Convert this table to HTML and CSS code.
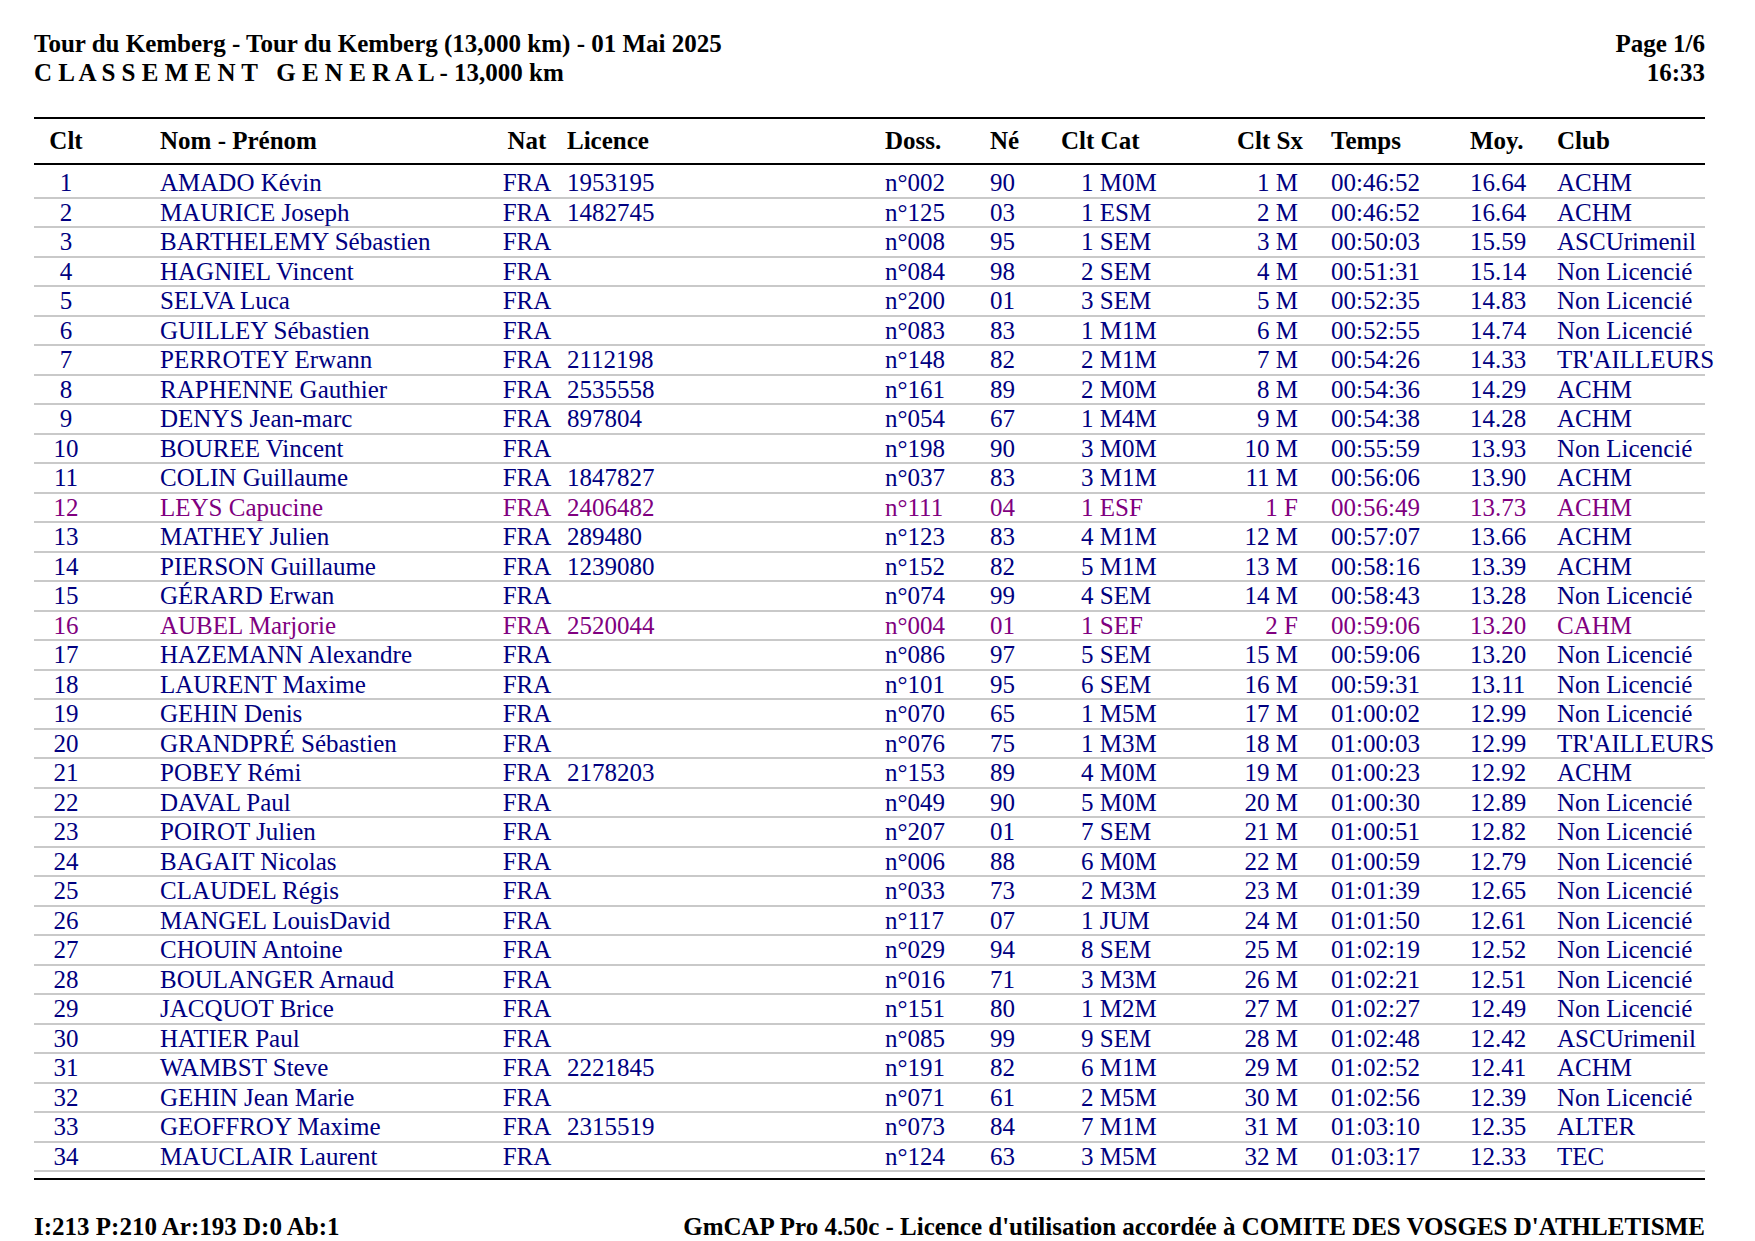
FILE: index.html
```html
<!DOCTYPE html>
<html lang="fr">
<head>
<meta charset="utf-8">
<title>Tour du Kemberg - Classement général</title>
<link rel="stylesheet" href="styles.css">
</head>
<body>
<div class="page">
  <header class="top">
    <div class="title">
      <div>Tour du Kemberg - Tour du Kemberg (13,000 km) - 01 Mai 2025</div>
      <div class="spaced">C L A S S E M E N T   G E N E R A L - 13,000 km</div>
    </div>
    <div class="pageinfo">
      <div>Page 1/6</div>
      <div>16:33</div>
    </div>
  </header>

  <section class="results">
    <div class="row head">
      <div class="c-clt">Clt</div><div class="c-nom">Nom - Prénom</div><div class="c-nat">Nat</div><div class="c-lic">Licence</div><div class="c-dos">Doss.</div><div class="c-ne">Né</div><div class="c-cat head-cat">Clt Cat</div><div class="c-sx head-sx">Clt Sx</div><div class="c-tps">Temps</div><div class="c-moy">Moy.</div><div class="c-club">Club</div>
    </div>
    <div class="body" id="rows"></div>
  </section>

  <footer class="foot">
    <div>I:213 P:210 Ar:193 D:0 Ab:1</div>
    <div>GmCAP Pro 4.50c - Licence d'utilisation accordée à COMITE DES VOSGES D'ATHLETISME</div>
  </footer>
</div>
<script src="script.js"></script>
</body>
</html>
```

FILE: script.js
```js
const data = [
["1","AMADO Kévin","1953195","n°002","90","1 M0M","1 M","00:46:52","16.64","ACHM",0],
["2","MAURICE Joseph","1482745","n°125","03","1 ESM","2 M","00:46:52","16.64","ACHM",0],
["3","BARTHELEMY Sébastien","","n°008","95","1 SEM","3 M","00:50:03","15.59","ASCUrimenil",0],
["4","HAGNIEL Vincent","","n°084","98","2 SEM","4 M","00:51:31","15.14","Non Licencié",0],
["5","SELVA Luca","","n°200","01","3 SEM","5 M","00:52:35","14.83","Non Licencié",0],
["6","GUILLEY Sébastien","","n°083","83","1 M1M","6 M","00:52:55","14.74","Non Licencié",0],
["7","PERROTEY Erwann","2112198","n°148","82","2 M1M","7 M","00:54:26","14.33","TR'AILLEURS",0],
["8","RAPHENNE Gauthier","2535558","n°161","89","2 M0M","8 M","00:54:36","14.29","ACHM",0],
["9","DENYS Jean-marc","897804","n°054","67","1 M4M","9 M","00:54:38","14.28","ACHM",0],
["10","BOUREE Vincent","","n°198","90","3 M0M","10 M","00:55:59","13.93","Non Licencié",0],
["11","COLIN Guillaume","1847827","n°037","83","3 M1M","11 M","00:56:06","13.90","ACHM",0],
["12","LEYS Capucine","2406482","n°111","04","1 ESF","1 F","00:56:49","13.73","ACHM",1],
["13","MATHEY Julien","289480","n°123","83","4 M1M","12 M","00:57:07","13.66","ACHM",0],
["14","PIERSON Guillaume","1239080","n°152","82","5 M1M","13 M","00:58:16","13.39","ACHM",0],
["15","GÉRARD Erwan","","n°074","99","4 SEM","14 M","00:58:43","13.28","Non Licencié",0],
["16","AUBEL Marjorie","2520044","n°004","01","1 SEF","2 F","00:59:06","13.20","CAHM",1],
["17","HAZEMANN Alexandre","","n°086","97","5 SEM","15 M","00:59:06","13.20","Non Licencié",0],
["18","LAURENT Maxime","","n°101","95","6 SEM","16 M","00:59:31","13.11","Non Licencié",0],
["19","GEHIN Denis","","n°070","65","1 M5M","17 M","01:00:02","12.99","Non Licencié",0],
["20","GRANDPRÉ Sébastien","","n°076","75","1 M3M","18 M","01:00:03","12.99","TR'AILLEURS",0],
["21","POBEY Rémi","2178203","n°153","89","4 M0M","19 M","01:00:23","12.92","ACHM",0],
["22","DAVAL Paul","","n°049","90","5 M0M","20 M","01:00:30","12.89","Non Licencié",0],
["23","POIROT Julien","","n°207","01","7 SEM","21 M","01:00:51","12.82","Non Licencié",0],
["24","BAGAIT Nicolas","","n°006","88","6 M0M","22 M","01:00:59","12.79","Non Licencié",0],
["25","CLAUDEL Régis","","n°033","73","2 M3M","23 M","01:01:39","12.65","Non Licencié",0],
["26","MANGEL LouisDavid","","n°117","07","1 JUM","24 M","01:01:50","12.61","Non Licencié",0],
["27","CHOUIN Antoine","","n°029","94","8 SEM","25 M","01:02:19","12.52","Non Licencié",0],
["28","BOULANGER Arnaud","","n°016","71","3 M3M","26 M","01:02:21","12.51","Non Licencié",0],
["29","JACQUOT Brice","","n°151","80","1 M2M","27 M","01:02:27","12.49","Non Licencié",0],
["30","HATIER Paul","","n°085","99","9 SEM","28 M","01:02:48","12.42","ASCUrimenil",0],
["31","WAMBST Steve","2221845","n°191","82","6 M1M","29 M","01:02:52","12.41","ACHM",0],
["32","GEHIN Jean Marie","","n°071","61","2 M5M","30 M","01:02:56","12.39","Non Licencié",0],
["33","GEOFFROY Maxime","2315519","n°073","84","7 M1M","31 M","01:03:10","12.35","ALTER",0],
["34","MAUCLAIR Laurent","","n°124","63","3 M5M","32 M","01:03:17","12.33","TEC",0]
];
const cls = ["c-clt","c-nom","c-nat","c-lic","c-dos","c-ne","c-cat","c-sx","c-tps","c-moy","c-club"];
const host = document.getElementById("rows");
for (const r of data) {
  const row = document.createElement("div");
  row.className = "row" + (r[10] ? " f" : "");
  const vals = [r[0], r[1], "FRA", r[2], r[3], r[4], r[5], r[6], r[7], r[8], r[9]];
  vals.forEach((v, i) => {
    const c = document.createElement("div");
    c.className = cls[i];
    c.textContent = v;
    row.appendChild(c);
  });
  host.appendChild(row);
}
```

FILE: styles.css
```css
html, body {
  margin: 0;
  padding: 0;
  background: #ffffff;
}

body {
  font-family: "Liberation Serif", "Times New Roman", serif;
  font-size: 25px;
  color: #000;
}

.page {
  width: 1671px;
  padding: 29px 0 0 34px;
}

.top {
  display: flex;
  justify-content: space-between;
  font-weight: bold;
  line-height: 29px;
}

.spaced {
  white-space: pre;
}

.pageinfo {
  text-align: right;
}

.results {
  margin-top: 30px;
  border-top: 2px solid #000;
  border-bottom: 2px solid #000;
  padding-bottom: 6px;
}

.row {
  display: grid;
  grid-template-columns: 64px 402px 54px 331px 105px 71px 176px 94px 139px 87px 148px;
  line-height: 27.5px;
  border-bottom: 2px solid #c9c9c9;
  color: #000080;
  white-space: nowrap;
}

.row.f {
  color: #800080;
}

.row.head {
  color: #000;
  font-weight: bold;
  line-height: 43.5px;
  border-bottom: 2px solid #000;
}

.body {
  padding-top: 4.5px;
}

.c-clt { text-align: center; }
.c-nom { padding-left: 62px; }
.c-nat { text-align: center; }
.c-lic { padding-left: 13px; }
.c-cat { padding-left: 20px; }
.c-cat.head-cat { padding-left: 0; }
.c-sx { text-align: right; padding-right: 33px; }
.c-sx.head-sx { padding-right: 29px; }
.c-club { overflow: visible; }

.foot {
  display: flex;
  justify-content: space-between;
  margin-top: 32px;
  font-weight: bold;
  line-height: 29px;
}
```
